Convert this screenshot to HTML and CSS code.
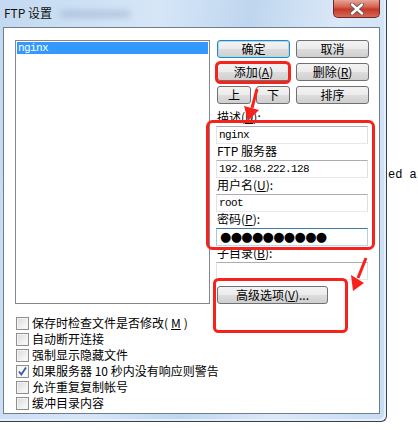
FILE: index.html
```html
<!DOCTYPE html>
<html lang="zh-CN">
  <head>
    <meta charset="UTF-8" />
    <title>FTP 设置</title>
    <link rel="stylesheet" href="styles.css">
  </head>
  <body>
    <div class="screen">
      <div class="window">
        <div class="titlebar">
          <span class="title">FTP 设置</span>
          <span class="smudge"></span>
          <span class="close">
            <svg width="20" height="12" viewBox="0 0 20 12">
              <path d="M5 1.5 L15 10.5 M15 1.5 L5 10.5" stroke="#5a5a5a" stroke-width="4.2" stroke-linecap="round" />
              <path d="M5 1.5 L15 10.5 M15 1.5 L5 10.5" stroke="#fff" stroke-width="2.4" stroke-linecap="round" />
            </svg>
          </span>
        </div>
        <div class="client">
          <div class="top">
            <div class="listbox">
              <div class="item selected">nginx</div>
            </div>
            <div class="side">
              <div class="btns">
                <button class="btn default">确定</button>
                <button class="btn">取消</button>
                <button class="btn">添加(<u>A</u>)</button>
                <button class="btn">删除(<u>R</u>)</button>
                <div class="updown">
                  <button class="btn">上</button>
                  <button class="btn">下</button>
                </div>
                <button class="btn">排序</button>
              </div>
              <div class="fields">
                <label class="lbl first">描述(<u>D</u>):</label>
                <div class="field">nginx</div>
                <label class="lbl">FTP 服务器</label>
                <div class="field">192.168.222.128</div>
                <label class="lbl">用户名(<u>U</u>):</label>
                <div class="field">root</div>
                <label class="lbl">密码(<u>P</u>):</label>
                <div class="field focus"><span class="dots">●●●●●●●●●●</span></div>
                <label class="lbl">子目录(<u>B</u>):</label>
                <div class="field"></div>
              </div>
              <button class="btn adv">高级选项(<u>V</u>)...</button>
            </div>
          </div>
          <ul class="checks">
            <li><span class="box"></span>保存时检查文件是否修改(<u>M</u>)</li>
            <li><span class="box"></span>自动断开连接</li>
            <li><span class="box"></span>强制显示隐藏文件</li>
            <li>
              <span class="box checked">
                <svg width="11" height="11" viewBox="0 0 11 11">
                  <path d="M2 5.5 L4.3 8.5 L9 1.5" fill="none" stroke="#3a56a8" stroke-width="1.8" />
                </svg>
              </span>如果服务器 10 秒内没有响应则警告
            </li>
            <li><span class="box"></span>允许重复复制帐号</li>
            <li><span class="box"></span>缓冲目录内容</li>
          </ul>
        </div>
      </div>
      <div class="behind">ed ar</div>

      <!-- red annotations drawn over the dialog -->
      <svg class="marks" width="418" height="430" viewBox="0 0 418 430">
        <g fill="none" stroke="#f8221c" stroke-width="3">
          <rect x="216.5" y="62.5" width="73" height="20" rx="4" />
          <rect x="207.5" y="121.5" width="166" height="127" rx="5" />
          <rect x="214.5" y="279.5" width="132" height="52" rx="4" />
          <path d="M257 89 L252 108" />
          <path d="M366 258 L358 278" />
        </g>
        <g fill="#f8221c">
          <polygon points="244,106 259,110 248,121" />
          <polygon points="351,275 364,283 353,291" />
        </g>
      </svg>
    </div>
  </body>
</html>
```

FILE: styles.css
```css
* {
  box-sizing: border-box;
  margin: 0;
  padding: 0;
}
body {
  width: 418px;
  height: 430px;
  overflow: hidden;
  background: #fff;
  font-family: "Noto Sans CJK SC", "Liberation Sans", sans-serif;
  font-size: 12px;
  color: #000;
}
u {
  text-decoration: underline;
}
.screen {
  position: relative;
  display: flex;
  align-items: flex-start;
  height: 430px;
}
.window {
  flex: none;
  width: 387px;
  height: 422px;
  display: flex;
  flex-direction: column;
  padding: 0 6px 7px 3px;
  background: linear-gradient(100deg, #c3d9f1 0%, #d6e6f7 35%, #bfd6ef 55%, #dbe9f8 75%, #c6dcf3 100%);
  border-right: 1px solid #34414f;
  border-bottom: 1px solid #34414f;
  border-bottom-right-radius: 6px;
  box-shadow: inset -2px -2px 0 #e4effb;
}
.titlebar {
  height: 27px;
  display: flex;
  align-items: flex-start;
  position: relative;

  & .title {
    margin: 5px 0 0 1px;
    font-size: 12px;
    line-height: 16px;
    color: #111;
  }
  & .smudge {
    margin: 11px 0 0 8px;
    width: 70px;
    height: 6px;
    border-radius: 3px;
    background: rgba(110, 135, 170, 0.35);
    filter: blur(3px);
  }
  & .close {
    margin-left: auto;
    width: 47px;
    height: 18px;
    display: flex;
    align-items: center;
    justify-content: center;
    border: 1px solid #6e2a22;
    border-top: 0;
    border-radius: 0 0 5px 5px;
    background: linear-gradient(#e7a597 0%, #d7624f 40%, #c3392a 55%, #d66a55 100%);
  }
}
.client {
  flex: 1;
  background: #fff;
  border: 1px solid #6f7d8c;
  padding: 12px 0 0 11px;
}
.top {
  display: flex;
  gap: 6px;
}
.listbox {
  width: 195px;
  height: 264px;
  border: 1px solid #828790;
  padding: 1px;

  & .item {
    height: 12px;
    line-height: 12px;
    padding-left: 1px;
    font-family: "Liberation Mono", monospace;
    font-size: 11px;
    letter-spacing: -0.6px;
  }
  & .selected {
    background: #3399ff;
    color: #fff;
  }
}
.side {
  width: 152px;
  display: flex;
  flex-direction: column;
}
.btns {
  display: grid;
  grid-template-columns: 73px 73px;
  grid-auto-rows: 18px;
  column-gap: 6px;
  row-gap: 5px;
  padding-left: 1px;
}
.updown {
  display: flex;
  gap: 5px;

  & .btn {
    width: 34px;
  }
}
.btn {
  height: 18px;
  display: flex;
  align-items: center;
  justify-content: center;
  border: 1px solid #707070;
  border-radius: 3px;
  background: linear-gradient(#f3f3f3 0%, #ebebeb 50%, #dddddd 51%, #cfcfcf 100%);
  font-family: inherit;
  font-size: 12px;
  line-height: 16px;
  color: #000;
}
.btn.default {
  border-color: #3c7fb1;
  box-shadow: inset 0 0 0 1px #97e0f5;
}
.btn.adv {
  width: 111px;
  margin: 6px 0 0 1px;
}
.fields {
  display: flex;
  flex-direction: column;
}
.lbl {
  height: 16px;
  line-height: 14px;
  padding-left: 1px;
}
.lbl.first {
  margin-top: 6px;
}
.field {
  height: 18px;
  border: 1px solid;
  border-color: #abadb3 #dbdfe6 #e3e9ef #e2e3ea;
  padding-left: 2px;
  font-family: "Liberation Mono", monospace;
  font-size: 11px;
  line-height: 16px;
  letter-spacing: -0.6px;
}
.field.focus {
  border-color: #3d7bad #b5cfe7 #b7d9ed #a4c9e3;
  display: flex;
  align-items: center;
}
.dots {
  font-family: "DejaVu Sans", sans-serif;
  font-size: 13px;
  line-height: 14px;
  letter-spacing: -0.7px;
  margin-left: 1px;
}
.checks {
  list-style: none;
  margin-top: 11px;
  padding-left: 1px;

  & li {
    height: 16px;
    display: flex;
    align-items: center;
    gap: 3px;
    line-height: 16px;
  }
}
.box {
  width: 13px;
  height: 13px;
  flex: none;
  display: flex;
  align-items: center;
  justify-content: center;
  border: 1px solid #8e8f8f;
  background: linear-gradient(135deg, #d8d8d8 0%, #f0f0f0 60%, #fdfdfd 100%);
  box-shadow: inset 0 0 0 1px #f4f4f4;
}
.box.checked {
  background: #f7f7f7;
}
.behind {
  flex: none;
  width: 31px;
  overflow: hidden;
  white-space: pre;
  padding: 168px 0 0 1px;
  font-family: "Liberation Mono", monospace;
  font-size: 12px;
  line-height: 14px;
}
.marks {
  position: absolute;
  left: 0;
  top: 0;
  pointer-events: none;
}
```
